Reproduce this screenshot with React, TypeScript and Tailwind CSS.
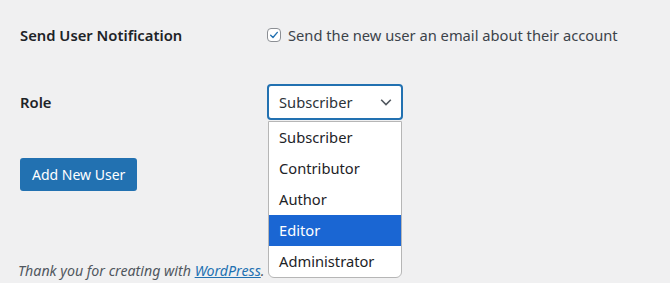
const roles = ['Subscriber', 'Contributor', 'Author', 'Editor', 'Administrator'];

export default function App() {
  return (
    <div className="w-[670px] h-[283px] bg-[#f0f0f1] text-[#1d2327] font-['Noto_Sans',sans-serif] relative overflow-hidden">
      <div className="pl-5">
        {/* notification row */}
        <div className="flex items-center h-[36px] mt-[17px]">
          <div className="w-[247px] text-[14.8px] font-semibold">Send User Notification</div>
          <label className="flex items-center gap-[7px] text-[14.7px] text-[#3c434a]">
            <span className="w-[14px] h-[14px] rounded-[4px] border border-[#8c8f94] bg-white flex items-center justify-center">
              <svg viewBox="0 0 12 12" className="w-[10px] h-[10px]">
                <path d="M2 6.3 L4.8 9 L10 2.8" fill="none" stroke="#2271b1" strokeWidth="1.6" strokeLinecap="round" strokeLinejoin="round" />
              </svg>
            </span>
            Send the new user an email about their account
          </label>
        </div>

        {/* role row */}
        <div className="flex items-center mt-[31px]">
          <div className="w-[247px] text-[14.8px] font-semibold">Role</div>
          <div className="relative">
            <div className="w-[136px] h-[36px] rounded-[4px] border-2 border-[#2271b1] bg-white flex items-center justify-between pl-[10px] pr-[8px] text-[14.7px] text-[#2c3338]">
              <span>Subscriber</span>
              <svg viewBox="0 0 16 16" className="w-[14px] h-[14px]">
                <path d="M2.5 5.5 L8 11 L13.5 5.5" fill="none" stroke="#50575e" strokeWidth="1.8" />
              </svg>
            </div>
            <ul className="absolute left-[1px] top-[37px] w-[134px] bg-white border border-[#b6b6b6] rounded-b-[6px] z-10 overflow-hidden text-[14.7px] text-[#1d2327]">
              {roles.map((r) => (
                <li
                  key={r}
                  className={
                    'h-[31px] flex items-center pl-[10px] ' +
                    (r === 'Editor' ? 'bg-[#1a66d3] text-white' : '')
                  }
                >
                  {r}
                </li>
              ))}
            </ul>
          </div>
        </div>

        <button className="mt-[38px] h-[33px] px-[12px] rounded-[3px] bg-[#2271b1] text-white text-[14px] flex items-center">
          Add New User
        </button>
      </div>

      <p className="absolute left-[18px] top-[260px] text-[14.2px] italic text-[#50575e]">
        Thank you for creating with{' '}
        <a className="text-[#2271b1] underline">WordPress</a>.
      </p>
    </div>
  );
}
